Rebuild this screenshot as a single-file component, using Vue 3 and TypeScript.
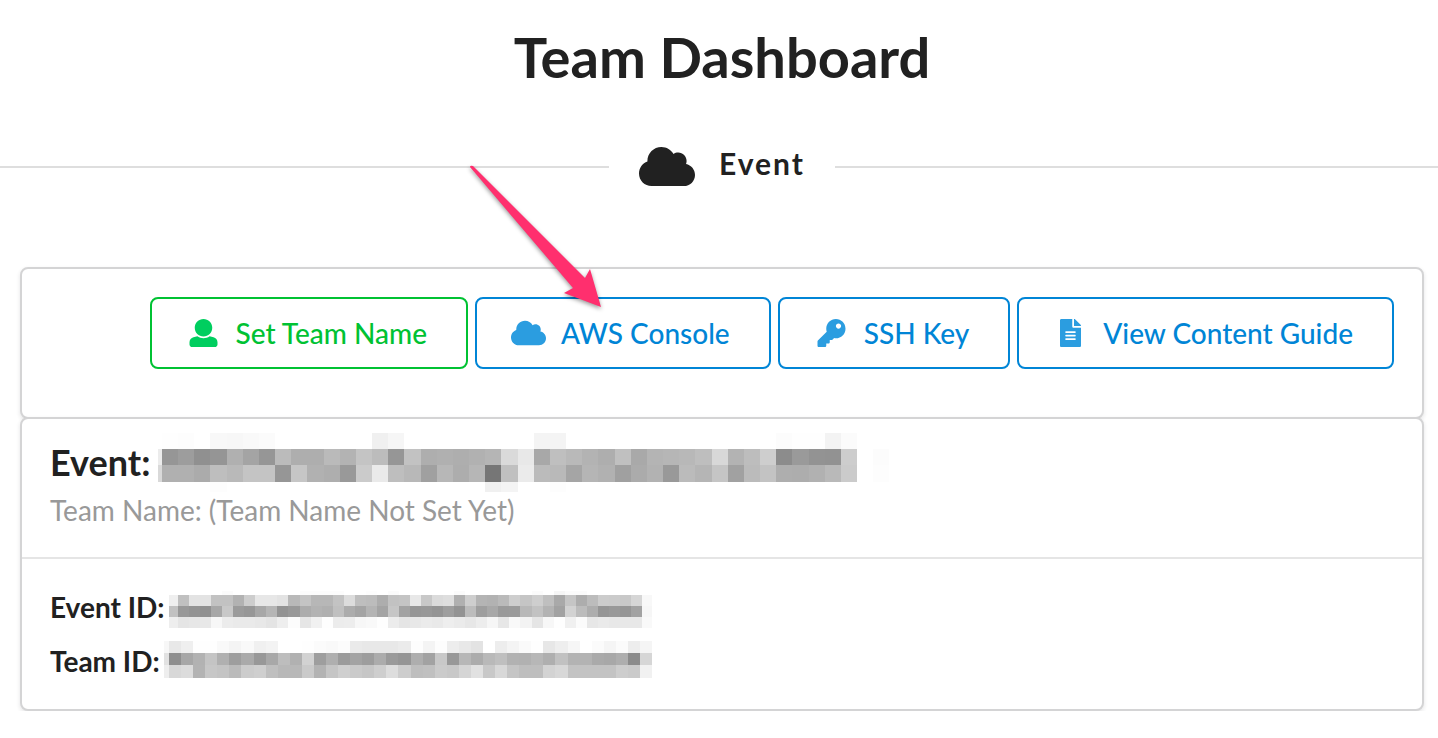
<script setup lang="ts">
interface Cell {
  x: number
  y: number
  w: number
  h: number
  fill: string
}

interface Mosaic {
  width: number
  height: number
  cells: Cell[]
}

/** Each row is [top, height, lead cell + cells as two-digit grey levels]. */
type Row = [number, number, string]

function mosaic(lead: number, span: number, count: number, end: number, height: number, rows: Row[]): Mosaic {
  const edge = (i: number): number => (i < 0 ? 0 : Math.min(end, lead + Math.round((i * span) / count)))
  const cells = rows.flatMap(([y, h, levels]) =>
    levels.split(' ').map((level, n) => ({
      x: edge(n - 1),
      y,
      w: edge(n) - edge(n - 1),
      h,
      fill: `#${level}${level}${level}`,
    })),
  )
  return { width: end, height, cells: cells.filter((c) => c.w > 0 && c.fill !== '#ffffff') }
}

const eventName = mosaic(4, 695, 43, 731, 60, [
  [0, 16, 'ff fe fd ff f8 f7 f9 fb ff ff ff ff ff ff f0 f6 ff ff ff ff ff ff ff ff f4 f4 ff ff ff ff ff ff ff ff ff ff ff ff ff fc fe fe f3 fb'],
  [16, 16, 'ec 96 9d 90 95 b0 a4 96 bb ae ae ba b3 c4 bc 96 c2 ae b0 ae b1 b5 da e8 a8 bf b9 b3 ae c0 a9 b4 b6 b8 be d8 b3 bd ce 8c 9a 93 92 cd ff fc'],
  [32, 17, 'd9 b0 b0 ab be b9 c4 c4 96 c6 b1 ae 99 cb ea be b8 a0 b7 ad b6 76 c0 eb bb b9 a5 b5 b1 a0 ab b2 99 bb b5 c5 a1 bb c3 ae ad b1 b9 cb ff fd'],
  [49, 10, 'ff ff ff ff fd ff ff ff ff ff ff ff ff ff ff ff ff ff ff ff ff f0 f4 ff ff fd'],
])

const eventId = mosaic(9, 464, 42, 483, 54, [
  [10, 4, 'ff ff ff ff ff fb ff ff ff ff ff ff fc fc fc fc ff ff fd ff fb ff ff ff ff ff fb ff ff ff ff ff ff fb ff f6 fb fb'],
  [14, 11, 'ef c0 e3 e3 c2 c2 b2 cd e7 e7 e3 b9 c4 b7 b7 c3 dc be bc ad c2 c4 e8 c8 db de b0 ce b4 b2 ba ce c5 ce bf a9 c5 ad bc cc cb c8 d6 f8'],
  [25, 11, 'c1 98 93 90 a7 c8 9b 97 a7 b5 93 99 ac b3 b0 c0 ac a4 b4 a4 c6 a2 96 98 94 9e 93 bc 9e a8 9a 9b b8 c2 b3 a2 d2 bc ad 95 99 95 a2 f6'],
  [36, 11, 'ee e5 e7 e8 f7 ec ea ea e8 e4 ee fc e6 f1 fe ec ed f7 f9 fe ec e5 e8 eb e9 ee eb e7 ed f6 e7 f9 f3 e5 f7 fe f0 fb e7 ea e8 e8 e8 f9'],
])

const teamId = mosaic(5, 471, 39, 488, 54, [
  [6, 12, 'f7 e8 ef fe fe f9 f4 f9 f0 f3 ff ff fe fb f9 fc ea e8 e8 e8 eb fd f4 fd ed e8 e3 ff ed f4 fa fe e7 ee f6 ff fb f5 fb ed f5'],
  [18, 12, 'e2 8f a7 b2 c4 b0 9e aa 98 a8 bd b1 d2 9e af 9b a3 9d ac 9a 95 ae a2 c8 98 b7 ac b9 bf b2 b1 b7 af c1 b3 b3 aa a8 ae 8b d6'],
  [30, 13, 'ee d8 dc b3 c7 c4 bb cc cf bf b8 b8 ca b3 c5 cf ca c6 ce dd cd be c0 cb c8 d5 e1 c8 d8 c5 be be d3 d8 c3 c3 c3 c3 cd ca f1'],
])

const details = [
  { label: 'Event ID:', value: eventId },
  { label: 'Team ID:', value: teamId },
]

const cloud =
  'M537.6 226.6c4.1-10.7 6.4-22.4 6.4-34.6 0-53-43-96-96-96-19.7 0-38.1 6-53.3 16.2C367 64.2 315.3 32 256 32c-88.4 0-160 71.6-160 160 0 2.7.1 5.4.2 8.1C40.2 219.8 0 273.2 0 336c0 79.5 64.5 144 144 144h368c70.7 0 128-57.3 128-128 0-61.9-44-113.6-102.4-125.4z'

const actions = [
  {
    label: 'Set Team Name',
    tone: 'green',
    box: '0 0 512 512',
    pointed: false,
    path: 'M256 0c88.366 0 160 71.634 160 160s-71.634 160-160 160S96 248.366 96 160 167.634 0 256 0zm183.283 333.821l-71.313-17.828c-74.923 53.89-165.738 41.864-223.94 0l-71.313 17.828C29.981 344.505 0 382.903 0 426.955V464c0 26.51 21.49 48 48 48h416c26.51 0 48-21.49 48-48v-37.045c0-44.052-29.981-82.45-72.717-93.134z',
  },
  { label: 'AWS Console', tone: 'blue', box: '0 0 640 512', pointed: true, path: cloud },
  {
    label: 'SSH Key',
    tone: 'blue',
    box: '0 0 512 512',
    pointed: false,
    path: 'M512 176.001C512 273.203 433.202 352 336 352c-11.22 0-22.19-1.062-32.827-3.069l-24.012 27.014A23.999 23.999 0 0 1 261.223 384H224v40c0 13.255-10.745 24-24 24h-40v40c0 13.255-10.745 24-24 24H24c-13.255 0-24-10.745-24-24v-78.059c0-6.365 2.529-12.47 7.029-16.971l161.802-161.802C163.108 213.814 160 195.271 160 176 160 78.798 238.797.001 335.999 0 433.488-.001 512 78.511 512 176.001zM336 128c0 26.51 21.49 48 48 48s48-21.49 48-48-21.49-48-48-48-48 21.49-48 48z',
  },
  {
    label: 'View Content Guide',
    tone: 'blue',
    box: '0 0 384 512',
    pointed: false,
    path: 'M224 136V0H24C10.7 0 0 10.7 0 24v464c0 13.3 10.7 24 24 24h336c13.3 0 24-10.7 24-24V160H248c-13.2 0-24-10.8-24-24zm64 236c0 6.6-5.4 12-12 12H108c-6.6 0-12-5.4-12-12v-8c0-6.6 5.4-12 12-12h168c6.6 0 12 5.4 12 12v8zm0-64c0 6.6-5.4 12-12 12H108c-6.6 0-12-5.4-12-12v-8c0-6.6 5.4-12 12-12h168c6.6 0 12 5.4 12 12v8zm0-72v8c0 6.6-5.4 12-12 12H108c-6.6 0-12-5.4-12-12v-8c0-6.6 5.4-12 12-12h168c6.6 0 12 5.4 12 12zm96-114.1v6.1H256V0h6.1c6.4 0 12.5 2.5 17 7l97.9 98c4.5 4.5 7 10.6 7 16.9z',
  },
]
</script>

<template>
  <main class="page">
    <h1 class="title">Team Dashboard</h1>

    <h2 class="divider">
      <svg class="divider-icon" viewBox="0 0 640 512" aria-hidden="true"><path :d="cloud" /></svg>
      <span class="divider-text">Event</span>
    </h2>

    <div class="cards">
      <section class="card actions">
        <button v-for="a in actions" :key="a.label" type="button" class="button" :class="a.tone">
          <svg class="icon" :viewBox="a.box" aria-hidden="true"><path :d="a.path" /></svg>
          <span>{{ a.label }}</span>
          <svg v-if="a.pointed" class="arrow" viewBox="0 0 140 150" aria-hidden="true">
            <path d="M2 3Q2 1 5 2L117 114L122 105L133 143L96 129L105 124Z" />
          </svg>
        </button>
      </section>

      <section class="card">
        <header class="summary">
          <h3 class="event">
            <span class="event-label">Event:</span>
            <svg class="mosaic" :width="eventName.width" :height="eventName.height" role="img" aria-label="Hidden event name">
              <rect v-for="(c, i) in eventName.cells" :key="i" :x="c.x" :y="c.y" :width="c.w" :height="c.h" :fill="c.fill" />
            </svg>
          </h3>
          <p class="team">Team Name: (Team Name Not Set Yet)</p>
        </header>
        <dl class="details">
          <div v-for="d in details" :key="d.label" class="detail">
            <dt>{{ d.label }}</dt>
            <dd>
              <svg class="mosaic" :width="d.value.width" :height="d.value.height" role="img" aria-label="Hidden identifier">
                <rect v-for="(c, i) in d.value.cells" :key="i" :x="c.x" :y="c.y" :width="c.w" :height="c.h" :fill="c.fill" />
              </svg>
            </dd>
          </div>
        </dl>
      </section>
    </div>
  </main>
</template>

<style>
body {
  margin: 0;
  background: #fff;
}
</style>

<style scoped>
.page {
  padding-top: 21px;
  font: 400 28px/40px Lato, "Liberation Sans", sans-serif;
  color: #212121;
}

.title {
  margin: 0;
  padding-left: 6px;
  font-size: 56px;
  line-height: 72px;
  font-weight: 700;
  text-align: center;
}

.divider {
  display: flex;
  align-items: center;
  margin: 46px 0 0;
  height: 56px;
  font-size: 30px;
  line-height: 40px;
  font-weight: 700;
}

.divider::before,
.divider::after {
  content: "";
  height: 2px;
  background: #dedede;
}

.divider::before {
  flex: 1 0 6px;
}

.divider::after {
  flex: 1 0 0;
}

.divider-icon {
  width: 56px;
  height: 45px;
  margin: 0 24px 2px 30px;
  fill: currentColor;
}

.divider-text {
  margin-right: 30px;
  padding-bottom: 8px;
  letter-spacing: 2px;
}

.cards {
  margin: 72px 14px 0 20px;
}

.card {
  background: #fff;
  border: 2px solid #d4d4d5;
  border-radius: 8px;
  box-shadow: 0 2px 4px rgba(34, 36, 38, 0.12);
}

.card + .card {
  position: relative;
  margin-top: -2px;
}

.actions {
  display: flex;
  flex-wrap: wrap;
  justify-content: flex-end;
  gap: 7px;
  padding: 28px 28px 48px;
}

.button {
  position: relative;
  display: flex;
  align-items: center;
  gap: 15px;
  padding: 14px 39px 14px 34px;
  border: 2px solid currentColor;
  border-radius: 8px;
  background: transparent;
  font: inherit;
  font-weight: 500;
  cursor: pointer;
}

.green {
  color: #00c233;
}

.blue {
  color: #0085d6;
}

.icon {
  width: 35px;
  height: 28px;
  fill: #2b9de0;
}

.green .icon {
  fill: #00ce5f;
}

.arrow {
  position: absolute;
  top: -135px;
  left: -9px;
  width: 140px;
  height: 150px;
  overflow: visible;
  fill: #ff2f6e;
  filter: drop-shadow(0 2px 2px rgba(0, 0, 0, 0.4));
  pointer-events: none;
}

.summary {
  padding: 14px 28px 28px;
  border-bottom: 2px solid #e5e5e5;
}

.event {
  display: flex;
  align-items: center;
  gap: 8px;
  margin: 0;
  font-size: 36px;
  line-height: 40px;
  font-weight: 700;
}

.event-label {
  padding-bottom: 2px;
}

.mosaic {
  display: block;
  flex: none;
}

.team {
  margin: 0;
  padding-bottom: 2px;
  line-height: 34px;
  color: #999;
}

.details {
  margin: 0;
  padding: 22px 28px 20px;
}

.detail {
  display: flex;
  align-items: center;
  gap: 4px;
}

.detail dt {
  padding-bottom: 2px;
  font-weight: 700;
}

.detail dd {
  margin: 0;
}
</style>
